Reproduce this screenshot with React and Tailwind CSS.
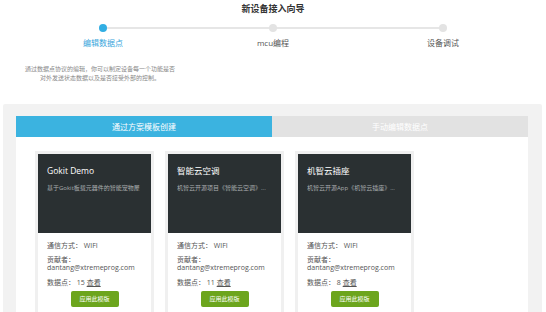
import React from "react";

const STEPS = [
  { label: "编辑数据点", active: true },
  { label: "mcu编程", active: false },
  { label: "设备调试", active: false },
];

const TEMPLATES = [
  { title: "Gokit Demo", desc: "基于Gokit板载元器件的智能宠物屋", points: 15 },
  { title: "智能云空调", desc: "机智云开源项目《智能云空调》...", points: 11 },
  { title: "机智云插座", desc: "机智云开源App《机智云插座》...", points: 8 },
];

function TemplateCard({ item }) {
  return (
    <div className="w-[119px] border-[3px] border-[#f0f0f0] bg-white">
      <div className="h-[79px] bg-[#2a3032] px-[9px] pt-[11px]">
        <div className="text-[8.5px] leading-[12px] text-white">{item.title}</div>
        <div className="mt-[7px] text-[6px] leading-[8px] text-[#a9adaf] whitespace-nowrap overflow-hidden">{item.desc}</div>
      </div>
      <div className="px-[9px] pt-[9px] text-[7px] text-[#555]">
        <div className="leading-[8px]">通信方式：&nbsp;WIFI</div>
        <div className="mt-[6px] leading-[8px]">贡献者：</div>
        <div className="leading-[8px]">dantang@xtremeprog.com</div>
        <div className="mt-[7px] leading-[8px]">
          数据点：&nbsp;{item.points} <span className="underline">查看</span>
        </div>
        <div className="flex justify-center mt-[4px] pb-[6px]">
          <button className="w-[48px] h-[16px] rounded-[2px] bg-[#6ca51d] text-white text-[6px]">应用此模版</button>
        </div>
      </div>
    </div>
  );
}

export default function App() {
  return (
    <div
      className="w-[546px] h-[312px] overflow-hidden bg-white"
      style={{ fontFamily: '"Open Sans","Noto Sans CJK SC",sans-serif' }}
    >
      {/* title */}
      <div className="pt-[2px] text-center text-[9px] leading-[14px] font-bold text-[#333]">新设备接入向导</div>

      {/* stepper */}
      <div className="relative mx-[18px] mt-[8px] w-[510px]">
        <div className="absolute left-[85px] right-[85px] top-[3px] h-[2px] bg-[#e6e6e6]" />
        <div className="relative grid grid-cols-3">
          {STEPS.map((s) => (
            <div key={s.label} className="flex flex-col items-center">
              <div className={`w-[8px] h-[8px] rounded-full ${s.active ? "bg-[#31aee3]" : "bg-[#e3e3e3]"}`} />
              <div className={`mt-[6px] text-[8px] leading-[10px] ${s.active ? "text-[#3aa6dc]" : "text-[#555]"}`}>{s.label}</div>
            </div>
          ))}
        </div>
      </div>

      {/* description */}
      <div className="ml-[20px] mt-[17px] w-[160px] text-center text-[6px] leading-[9px] text-[#888]">
        通过数据点协议的编辑，你可以制定设备每一个功能是否
        <br />
        对外发送状态数据以及是否接受外部的控制。
      </div>

      {/* panel */}
      <div className="ml-[3px] mt-[21px] w-[539px] h-[220px] rounded-[2px] bg-[#f2f2f2] pl-[13px] pt-[12px]">
        <div className="w-[512px] grid grid-cols-2 h-[21px] text-[8px] text-white">
          <div className="flex items-center justify-center bg-[#3bb3e0]">通过方案模板创建</div>
          <div className="flex items-center justify-center bg-[#e2e2e2]">手动编辑数据点</div>
        </div>
        <div className="w-[512px] h-[200px] bg-white pl-[19px] pt-[14px] flex gap-[11px] items-start">
          {TEMPLATES.map((t) => (
            <TemplateCard key={t.title} item={t} />
          ))}
        </div>
      </div>
    </div>
  );
}
